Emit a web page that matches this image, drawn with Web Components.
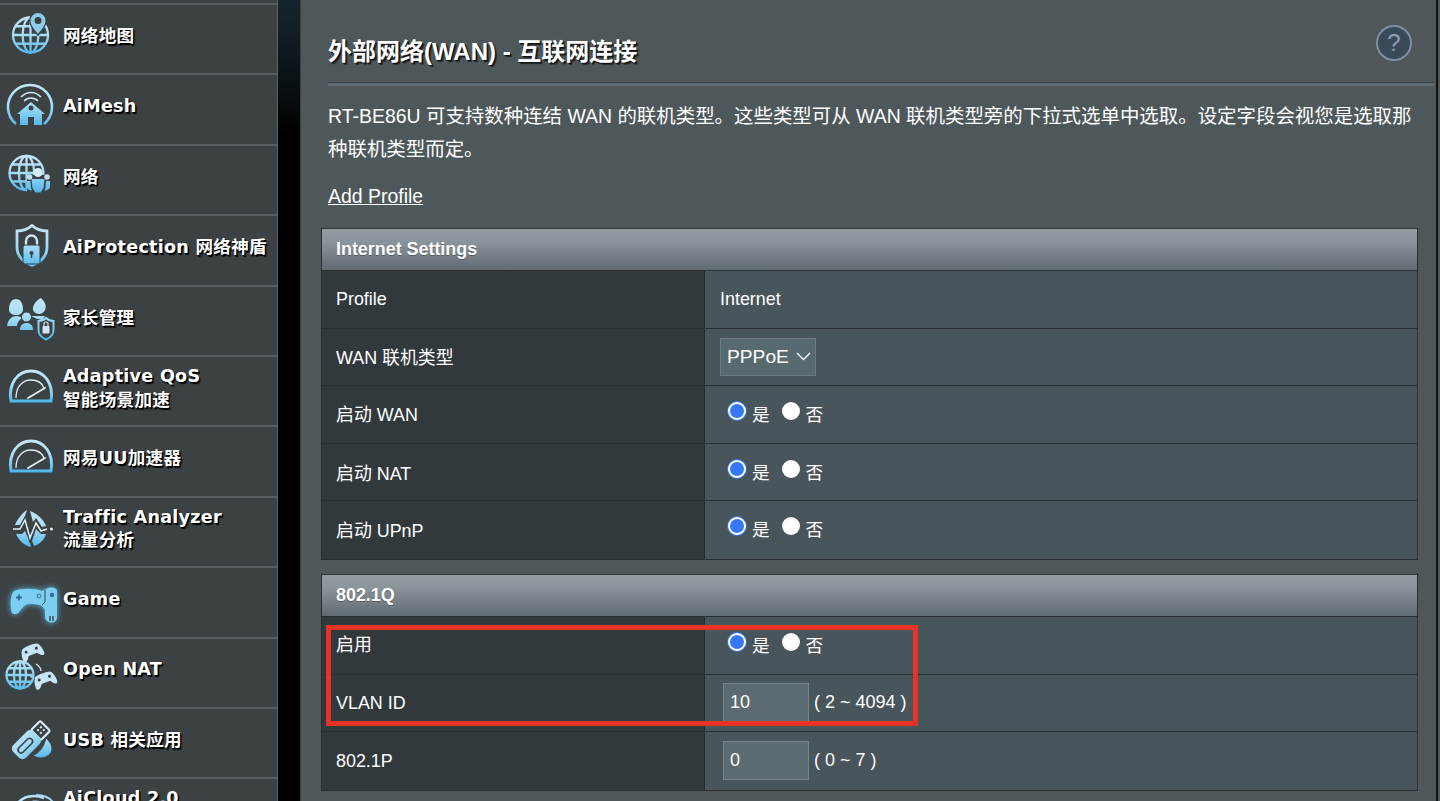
<!DOCTYPE html>
<html lang="zh-CN">
<head>
<meta charset="utf-8">
<title>外部网络(WAN) - 互联网连接</title>
<style>
  html, body { margin: 0; height: 100%; background: #000; overflow: hidden; }
  body { font-family: "Liberation Sans", "Noto Sans CJK SC", sans-serif; color: #fff; }
</style>
</head>
<body>
<router-page>
  <side-menu slot="menu">
    <menu-item icon="map">网络地图</menu-item>
    <menu-item icon="mesh">AiMesh</menu-item>
    <menu-item icon="net">网络</menu-item>
    <menu-item icon="shield">AiProtection 网络神盾</menu-item>
    <menu-item icon="parent">家长管理</menu-item>
    <menu-item icon="gauge">Adaptive QoS<span slot="sub">智能场景加速</span></menu-item>
    <menu-item icon="gauge">网易UU加速器</menu-item>
    <menu-item icon="traffic">Traffic Analyzer<span slot="sub">流量分析</span></menu-item>
    <menu-item icon="game">Game</menu-item>
    <menu-item icon="nat">Open NAT</menu-item>
    <menu-item icon="usb">USB 相关应用</menu-item>
    <menu-item icon="cloud">AiCloud 2.0<span slot="sub">&nbsp;</span></menu-item>
  </side-menu>

  <page-heading>外部网络(WAN) - 互联网连接</page-heading>
  <intro-text>
    RT-BE86U 可支持数种连结 WAN 的联机类型。这些类型可从 WAN 联机类型旁的下拉式选单中选取。设定字段会视您是选取那种联机类型而定。
    <span slot="link">Add Profile</span>
  </intro-text>

  <setting-table heading="Internet Settings">
    <setting-row label="Profile"><span>Internet</span></setting-row>
    <setting-row label="WAN 联机类型" up><select-box>PPPoE</select-box></setting-row>
    <setting-row label="启动 WAN" up><radio-pair></radio-pair></setting-row>
    <setting-row label="启动 NAT"><radio-pair></radio-pair></setting-row>
    <setting-row label="启动 UPnP" up upall><radio-pair></radio-pair></setting-row>
  </setting-table>

  <setting-table heading="802.1Q">
    <setting-row label="启用" tight><radio-pair></radio-pair></setting-row>
    <setting-row label="VLAN ID" down><text-field hint="( 2 ~ 4094 )">10</text-field></setting-row>
    <setting-row label="802.1P" down><text-field hint="( 0 ~ 7 )">0</text-field></setting-row>
    <red-mark slot="mark"></red-mark>
  </setting-table>
</router-page>

<script>
// icon drawings, in a 63x70 box, y = 0 is the top of the menu row
const BG = '#3c4144';
const globe = (cx, cy, r) => `
  <g fill="none" stroke="url(#g)" stroke-width="2.3">
    <circle cx="${cx}" cy="${cy}" r="${r}"/>
    <ellipse cx="${cx}" cy="${cy}" rx="${r * 0.45}" ry="${r}"/>
    <path d="M${cx} ${cy - r}V${cy + r}M${cx - r} ${cy}H${cx + r}M${cx - r * 0.85} ${cy - r * 0.5}H${cx + r * 0.85}M${cx - r * 0.85} ${cy + r * 0.5}H${cx + r * 0.85}"/>
  </g>`;
const gauge = `
  <path d="M11 46C8 28 18 16 31 16S54 28 51 46Z" fill="none" stroke="url(#g)" stroke-width="3"/>
  <path d="M16 43C16 31 23 25 31 25c6 0 11 3 13 8" fill="none" stroke="#dbeef7" stroke-width="1.300"/>
  <path d="M28 43L45 33" stroke="#e6f2f8" stroke-width="1.800" stroke-linecap="round"/>`;
const miniPad = `
  <path d="M-8-6C-5-7.500 5-7.500 8-6 10.500-4 12 3 11 6 9.500 8 7 6.500 4.500 2.500H-4.500C-7 6.500-9.500 8-11 6-12 3-10.500-4-8-6Z" fill="url(#g)"/>
  <circle cx="-5.500" cy="-2" r="1.500" fill="${BG}"/><circle cx="5.500" cy="-2" r="1.500" fill="${BG}"/>`;
const ICONS = {
  map: { range: [12, 52], art: `${globe(30.5, 32, 17.5)}
    <path d="M38 31C33 25 30.500 21.500 30.500 17.500a7.500 7.500 0 0 1 15 0C45.500 21.500 43 25 38 31Z" fill="${BG}" stroke="${BG}" stroke-width="3"/>
    <path d="M38 31C33 25 30.500 21.500 30.500 17.500a7.500 7.500 0 0 1 15 0C45.500 21.500 43 25 38 31Z" fill="#8ccdec"/>
    <circle cx="38" cy="17.500" r="3.500" fill="${BG}"/>` },
  mesh: { range: [10, 54], art: `
    <path d="M16 51A22 22 0 1 1 44 51" fill="none" stroke="url(#g)" stroke-width="2.600"/>
    <path d="M21 24C27 18 35 18 41 24M24 28C28 24 34 24 38 28" fill="none" stroke="#cfe6f2" stroke-width="1.600"/>
    <path d="M31 29L45 41H42V52H34V44H28V52H20V41H17Z" fill="url(#g)"/>
    <circle cx="31" cy="35" r="2.500" fill="${BG}"/>` },
  net: { range: [10, 48], art: `${globe(26.5, 29, 17)}
    <path d="M27 31h24v17H27Z" fill="${BG}"/>
    <circle cx="38" cy="28.500" r="4.500" fill="#d8ecf6"/>
    <circle cx="29.500" cy="33" r="2.800" fill="#bfe0f0"/><circle cx="47" cy="33" r="2.800" fill="#bfe0f0"/>
    <path d="M31.500 35h13l-1 9-3 4.500h-5l-3-4.500Z" fill="url(#g)"/>
    <path d="M26.500 37h4l.5 7 1 2.500c-4.500 0-5.500-2.500-5.500-4.500ZM50 37H46l-.5 7-1 2.500c4.500 0 5.500-2.500 5.500-4.500Z" fill="url(#g)"/>` },
  shield: { range: [11, 54], art: `
    <path d="M32 11.500C36 15 42 17 47 17V33C47 42 41 48 32 51.500 23 48 17 42 17 33V17C22 17 28 15 32 11.500Z" fill="none" stroke="url(#g)" stroke-width="2.800"/>
    <path d="M26 31v-4a5.500 5.500 0 0 1 11 0v4" fill="none" stroke="#cfe6f2" stroke-width="2.400"/>
    <rect x="23" y="31" width="17" height="19" rx="2" fill="url(#g)" stroke="${BG}"/>
    <circle cx="31.500" cy="39" r="2" fill="${BG}"/><path d="M30.800 39h1.400v5h-1.400Z" fill="${BG}"/>` },
  parent: { range: [12, 54], art: `
    <path d="M9 24C9 18 12 14 16 14S23 18 23 24C23 28 20 30 16 30S9 28 9 24Z" fill="url(#g)"/>
    <path d="M7 41C8 34 12 31 17 31c2 0 4 1 5 2-3 2-5 5-5 8Z" fill="url(#g)"/>
    <path d="M41 13C45 17 47 21 45 25 43 30 36 30 33.500 26 31.500 22 35 16 41 13Z" fill="url(#g)"/>
    <path d="M31 31h14l-3 4c-4-1-8-2-11-4Z" fill="url(#g)"/>
    <circle cx="26.500" cy="32" r="5" fill="url(#g)" stroke="${BG}"/>
    <path d="M20 45c0-5 3-7 6.500-7s6.500 2 6.500 7Z" fill="url(#g)"/>
    <path d="M46 33c2 2 5 3 7.500 3v9c0 5-4 8-7.500 9.500-3.500-1.500-7.500-4.500-7.500-9.500v-9c2.500 0 5.500-1 7.500-3Z" fill="${BG}" stroke="url(#g)" stroke-width="2"/>
    <rect x="42.500" y="41" width="7" height="7.500" rx="1" fill="#cfe6f2"/>
    <path d="M44 41v-2a2 2 0 0 1 4 0v2" fill="none" stroke="#cfe6f2" stroke-width="1.200"/>` },
  gauge: { range: [15, 47], art: gauge },
  traffic: { range: [12, 52], art: `
    <path d="M27 14C21 18 17 24 15 29H20L25 20ZM30 15C38 18 44 24 46 30L42 31 36 22 33 26ZM16 38C19 45 25 50 31 51L30 46 25 35 22 38ZM34 50C40 48 44 44 46 38H41L36 33 32 45Z" fill="url(#g)"/>
    <path d="M13 33H20L25 24 30 42 36 27 41 35 47 33" fill="none" stroke="${BG}" stroke-width="3.500"/>
    <path d="M13 33H20L25 24 30 42 36 27 41 35 47 33" fill="none" stroke="#e4f1f8" stroke-width="1.500"/>
    <circle cx="51.500" cy="33" r="1.500" fill="#e4f1f8"/>` },
  game: { range: [20, 60], glow: true, art: `
    <path d="M14 25C20 22 36 22 42 25L46 23C50 21 54 21 57 24V52C56 58 47 58 45 52V44C43 40 40 38 30 38 25 38 23 41 20 45 16 50 11 49 11 43 10 35 11 28 14 25Z" fill="#7ccff3"/>
    <path d="M16 31.500h6M19 28.500v6" stroke="#2e6f90" stroke-width="1.800"/>
    <circle cx="39" cy="30" r="2" fill="none" stroke="#2e6f90"/><circle cx="52" cy="29" r="2.200" fill="#2e6f90"/>
    <path d="M45 24V36L42 39" fill="none" stroke="${BG}" stroke-width="1"/>
    <path d="M50 50v5M53 50v5" stroke="${BG}" stroke-width="1.400"/>` },
  nat: { range: [6, 56], art: `${globe(20, 38, 13.500)}
    <g transform="translate(32 15) rotate(-22)">${miniPad}</g>
    <g transform="translate(45 43) rotate(-20)">${miniPad}</g>
    <path d="M36 27C39 29 41 31 41 34" fill="none" stroke="#cfe6f2" stroke-width="1.400"/>
    <circle cx="32" cy="39" r="2" fill="#8ccdec"/>` },
  usb: { range: [14, 52], art: `
    <g transform="rotate(-45 31 33)">
      <rect x="38" y="26" width="13" height="14" rx="1.500" fill="none" stroke="#d6eaf5" stroke-width="2.200"/>
      <path d="M42 30h2v2h-2ZM46 30h2v2h-2ZM42 34h2v2h-2ZM46 34h2v2h-2Z" fill="#d6eaf5"/>
      <rect x="10" y="24" width="29" height="18" rx="5" fill="url(#g)"/>
      <rect x="14" y="30" width="18" height="6" rx="3" fill="none" stroke="${BG}" stroke-width="1.600"/>
    </g>
    <path d="M46 31C50 35 52 38 52 42 52 47 46 51 41 51 38 51 35 50 33 48 40 46 44 39 46 31Z" fill="url(#g)" stroke="${BG}"/>` },
  cloud: { range: [15, 40], art: `
    <path d="M17 27C23 19 34 17 44 21M27 28C31 24 37 24 41 26" fill="none" stroke="url(#g)" stroke-width="2.600"/>
    <path d="M36 18C43 18 49 20 53 25" fill="none" stroke="#a7d8f0" stroke-width="2"/>` }
};

class MenuIcon extends HTMLElement {
  connectedCallback() {
    const icon = ICONS[this.getAttribute('name')];
    this.attachShadow({ mode: 'open' }).innerHTML = `
      <style>
        :host { display: block; width: 63px; height: 70px; flex: none; }
        svg { display: block; filter: blur(0.4px) ${icon.glow ? 'drop-shadow(0 0 3px #5bbbe8)' : ''}; }
      </style>
      <svg width="63" height="70" viewBox="0 0 63 70" aria-hidden="true">
        <defs>
          <linearGradient id="g" gradientUnits="userSpaceOnUse" x1="0" y1="${icon.range[0]}" x2="0" y2="${icon.range[1]}">
            <stop offset="0" stop-color="#c6e6f6"/>
            <stop offset="0.5" stop-color="#a4dcf5"/>
            <stop offset="1" stop-color="#4fb6ea"/>
          </linearGradient>
        </defs>
        ${icon.art}
      </svg>`;
  }
}
customElements.define('menu-icon', MenuIcon);

const menuItemTemplate = document.createElement('template');
menuItemTemplate.innerHTML = `
  <style>
    :host {
      display: flex;
      box-sizing: border-box;
      height: 70.4px;
      border-top: 2px solid #565c5f;
      color: #fff;
      font: bold 17.6px/23.5px "DejaVu Sans", "Noto Sans CJK SC", sans-serif;
      letter-spacing: 0.25px;
      text-shadow: 1px 1px 0 #000, 1.5px 1.5px 1px #000;
    }
    menu-icon { margin-top: -2px; }
    .label { display: flex; flex-direction: column; justify-content: center; padding-bottom: 5px; white-space: nowrap; }
    ::slotted([slot=sub]) { display: block; font-size: 17.6px; }
  </style>
  <menu-icon></menu-icon>
  <div class="label"><div><slot></slot></div><slot name="sub"></slot></div>
`;
class MenuItem extends HTMLElement {
  constructor() {
    super();
    this.attachShadow({ mode: 'open' });
    const content = menuItemTemplate.content.cloneNode(true);
    content.querySelector('menu-icon').setAttribute('name', this.getAttribute('icon'));
    this.shadowRoot.appendChild(content);
  }
}
customElements.define('menu-item', MenuItem);

const sideMenuTemplate = document.createElement('template');
sideMenuTemplate.innerHTML = `
  <style>
    :host {
      display: block;
      box-sizing: border-box;
      width: 278px;
      height: 100%;
      padding-top: 3px;
      overflow: hidden;
      background: ${BG};
      border-right: 1px solid #5c6265;
    }
  </style>
  <slot></slot>
`;
customElements.define('side-menu', class SideMenu extends HTMLElement {
  constructor() {
    super();
    this.attachShadow({ mode: 'open' }).appendChild(sideMenuTemplate.content.cloneNode(true));
  }
});

const pageTemplate = document.createElement('template');
pageTemplate.innerHTML = `
  <style>
    :host { display: flex; height: 801px; overflow: hidden; background: #000; }
    .gutter {
      width: 22px;
      flex: none;
      background: linear-gradient(#15252d 0, #101c22 40px, #070c0f 100px, #000 135px);
    }
    .main {
      flex: 1;
      min-width: 0;
      box-sizing: border-box;
      padding: 0 6px 0 20px;
      background: #4e585b;
      border-left: 1px solid #39403f;
      position: relative;
    }
    .edge { position: absolute; top: 0; bottom: 0; right: 2px; width: 2px; background: #0e1112; }
  </style>
  <slot name="menu"></slot>
  <div class="gutter"></div>
  <div class="main"><div class="edge"></div><slot></slot></div>
`;
customElements.define('router-page', class RouterPage extends HTMLElement {
  constructor() {
    super();
    this.attachShadow({ mode: 'open' }).appendChild(pageTemplate.content.cloneNode(true));
  }
});

const headingTemplate = document.createElement('template');
headingTemplate.innerHTML = `
  <style>
    :host { display: flex; align-items: flex-start; justify-content: space-between; height: 86px; box-sizing: border-box; margin-left: 7px; position: relative; border-bottom: 3px solid #5d6b72; box-shadow: inset 0 -1px 0 #353c3e; }
    h1 { margin: 37px 0 0; font: bold 24px/30px "Liberation Sans", "Noto Sans CJK SC", sans-serif; color: #fff; text-shadow: 1px 1px 0 #111, 2px 2px 1px #222; }
    .help {
      width: 32px; height: 32px; margin: 25px 22px 0 0;
      border: 2px solid #7f8fa3; border-radius: 50%;
      background: #3b4a58; color: #8f9fb3;
      display: flex; align-items: center; justify-content: center;
      font: 24px/1 "Liberation Sans", sans-serif;
    }
  </style>
  <h1><slot></slot></h1>
  <div class="help">?</div>
`;
customElements.define('page-heading', class PageHeading extends HTMLElement {
  constructor() {
    super();
    this.attachShadow({ mode: 'open' }).appendChild(headingTemplate.content.cloneNode(true));
  }
});

const introTemplate = document.createElement('template');
introTemplate.innerHTML = `
  <style>
    :host { display: block; margin: 14px 0 0 7px; width: 1089px; font: 19.44px/33px "Liberation Sans", "Noto Sans CJK SC", sans-serif; color: #fff; }
    .link { display: block; margin: 14px 0 15px; text-decoration: underline; }
  </style>
  <div><slot></slot></div>
  <div class="link"><slot name="link"></slot></div>
`;
customElements.define('intro-text', class IntroText extends HTMLElement {
  constructor() {
    super();
    this.attachShadow({ mode: 'open' }).appendChild(introTemplate.content.cloneNode(true));
  }
});

const tableTemplate = document.createElement('template');
tableTemplate.innerHTML = `
  <style>
    :host { display: block; position: relative; width: 1097px; margin-bottom: 14px; border: 1px solid #2b3133; border-top-color: #2f3537; box-sizing: border-box; }
    .head {
      box-sizing: border-box;
      height: 42px;
      padding-left: 14px;
      display: flex;
      align-items: center;
      font: bold 17.9px "Liberation Sans", "Noto Sans CJK SC", sans-serif;
      color: #fff;
      background: linear-gradient(#929ca1, #8a959b 30%, #5f6c72);
      border-bottom: 1px solid #2b3133;
      text-shadow: 0 1px 0 #545d61;
    }
  </style>
  <div class="head"></div>
  <slot></slot>
  <slot name="mark"></slot>
`;
customElements.define('setting-table', class SettingTable extends HTMLElement {
  constructor() {
    super();
    this.attachShadow({ mode: 'open' }).appendChild(tableTemplate.content.cloneNode(true));
    this.shadowRoot.querySelector('.head').textContent = this.getAttribute('heading');
  }
});

const rowTemplate = document.createElement('template');
rowTemplate.innerHTML = `
  <style>
    :host {
      display: grid;
      grid-template-columns: 383px 1fr;
      box-sizing: border-box;
      height: 57.6px;
      border-bottom: 1px solid #2b3133;
      font: 17.9px "Liberation Sans", "Noto Sans CJK SC", sans-serif;
      color: #fff;
    }
    :host(:last-of-type) { border-bottom: 0; }
    .th { background: #32393c; border-right: 1px solid #262b2d; padding-left: 14px; display: flex; align-items: center; }
    .td { background: #48555a; padding-left: 15px; display: flex; align-items: center; }
    :host([tight]) .th { padding-bottom: 4px; }
    :host([up]) .th { padding-bottom: 2px; }
    :host([upall]) .td { padding-bottom: 2px; }
    :host([down]) .th { padding-top: 2px; }
  </style>
  <div class="th"></div>
  <div class="td"><slot></slot></div>
`;
customElements.define('setting-row', class SettingRow extends HTMLElement {
  constructor() {
    super();
    this.attachShadow({ mode: 'open' }).appendChild(rowTemplate.content.cloneNode(true));
    this.shadowRoot.querySelector('.th').textContent = this.getAttribute('label');
  }
});

const radioTemplate = document.createElement('template');
radioTemplate.innerHTML = `
  <style>
    :host { display: flex; align-items: center; margin-left: 8px; font-size: 17.6px; }
    input {
      appearance: none; -webkit-appearance: none;
      box-sizing: border-box;
      width: 18px; height: 18px; margin: -6px 6px 0 0;
      border-radius: 50%;
      background: #fff;
    }
    input:checked { background: #3478f6; border: 2px solid #fff; box-shadow: 0 0 0 1px #3478f6; }
    span { margin: 0 12px 2px 0; }
  </style>
  <input type="radio" name="r" checked><span>是</span>
  <input type="radio" name="r"><span>否</span>
`;
customElements.define('radio-pair', class RadioPair extends HTMLElement {
  constructor() {
    super();
    this.attachShadow({ mode: 'open' }).appendChild(radioTemplate.content.cloneNode(true));
  }
});

const selectTemplate = document.createElement('template');
selectTemplate.innerHTML = `
  <style>
    :host {
      display: flex; align-items: center; box-sizing: border-box;
      width: 96px; height: 38px; padding-left: 6px;
      background: #586a70; border: 1px solid #6d7c81;
      font-size: 19.2px; color: #fff;
    }
    svg { margin-left: 7px; }
  </style>
  <slot></slot>
  <svg width="15" height="9" viewBox="0 0 15 9" aria-hidden="true"><path d="M1 1l6.500 6.500L14 1" fill="none" stroke="#fff" stroke-width="1.300"/></svg>
`;
customElements.define('select-box', class SelectBox extends HTMLElement {
  constructor() {
    super();
    this.attachShadow({ mode: 'open' }).appendChild(selectTemplate.content.cloneNode(true));
  }
});

const fieldTemplate = document.createElement('template');
fieldTemplate.innerHTML = `
  <style>
    :host { display: flex; align-items: center; margin-left: 3px; font-size: 18px; color: #fff; }
    .box {
      box-sizing: border-box; width: 86px; height: 39px; padding-left: 6px;
      display: flex; align-items: center;
      background: #5c6b71; border: 1px solid #75858a;
    }
    .hint { margin-left: 5px; white-space: pre; }
  </style>
  <div class="box"><slot></slot></div>
  <div class="hint"></div>
`;
customElements.define('text-field', class TextField extends HTMLElement {
  constructor() {
    super();
    this.attachShadow({ mode: 'open' }).appendChild(fieldTemplate.content.cloneNode(true));
    this.shadowRoot.querySelector('.hint').textContent = this.getAttribute('hint');
  }
});

// the hand drawn annotation that lies over the table
const markTemplate = document.createElement('template');
markTemplate.innerHTML = `
  <style>
    :host {
      position: absolute; left: 4px; top: 50px;
      box-sizing: border-box; width: 592px; height: 101px;
      border: 5px solid #e63323;
      pointer-events: none;
    }
  </style>
`;
customElements.define('red-mark', class RedMark extends HTMLElement {
  constructor() {
    super();
    this.attachShadow({ mode: 'open' }).appendChild(markTemplate.content.cloneNode(true));
  }
});
</script>
</body>
</html>
